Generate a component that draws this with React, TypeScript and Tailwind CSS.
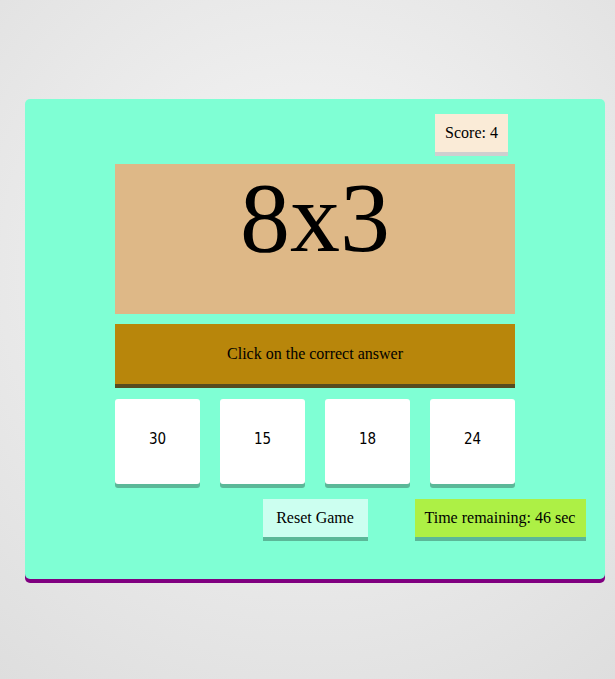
import React from "react";

export default function App() {
  const serif = "font-['Liberation_Serif','Times_New_Roman',serif]";
  const choices = ["30", "15", "18", "24"];
  return (
    <div className={`h-[679px] w-full overflow-hidden bg-[radial-gradient(circle_at_50%_40%,#f7f7f7,#dedede)] ${serif} text-[16px] text-black`}>
      <div className="ml-[25px] mt-[99px] h-[480px] w-[580px] rounded-[5px] bg-[#7fffd4] pt-[15px] shadow-[0_4px_0_0_#800080]">
        <div className="flex justify-end pr-[97px]">
          <div className="h-[38px] w-[73px] bg-[#faebd7] text-center leading-[38px] shadow-[0_4px_0_0_#cfcfcf]">
            Score: 4
          </div>
        </div>
        <div className="mx-auto mt-[12px] h-[150px] w-[400px] bg-[#deb887] text-center text-[100px] leading-[108px]">
          8x3
        </div>
        <div className="mx-auto mt-[10px] h-[60px] w-[400px] bg-[#b8860b] text-center leading-[60px] shadow-[0_4px_0_0_#574b1f]">
          Click on the correct answer
        </div>
        <div className="mx-auto mt-[15px] flex w-[400px] gap-[20px]">
          {choices.map((c) => (
            <div
              key={c}
              className="h-[85px] w-[85px] rounded-[3px] bg-white text-center font-['DejaVu_Sans_Condensed','DejaVu_Sans',sans-serif] text-[15px] leading-[80px] [font-stretch:condensed] shadow-[0_4px_0_0_#5bb898]"
            >
              {c}
            </div>
          ))}
        </div>
        <div className="mt-[15px] grid grid-cols-[1fr_105px_1fr]">
          <div />
          <div className="h-[38px] w-[105px] bg-[#ccfff0] text-center leading-[38px] shadow-[0_4px_0_0_#5bb898]">
            Reset Game
          </div>
          <div className="pl-[47px]">
            <div className="h-[38px] w-[171px] bg-[#adf045] text-center leading-[38px] shadow-[0_4px_0_0_#5bb898]">
              Time remaining: 46 sec
            </div>
          </div>
        </div>
      </div>
    </div>
  );
}
